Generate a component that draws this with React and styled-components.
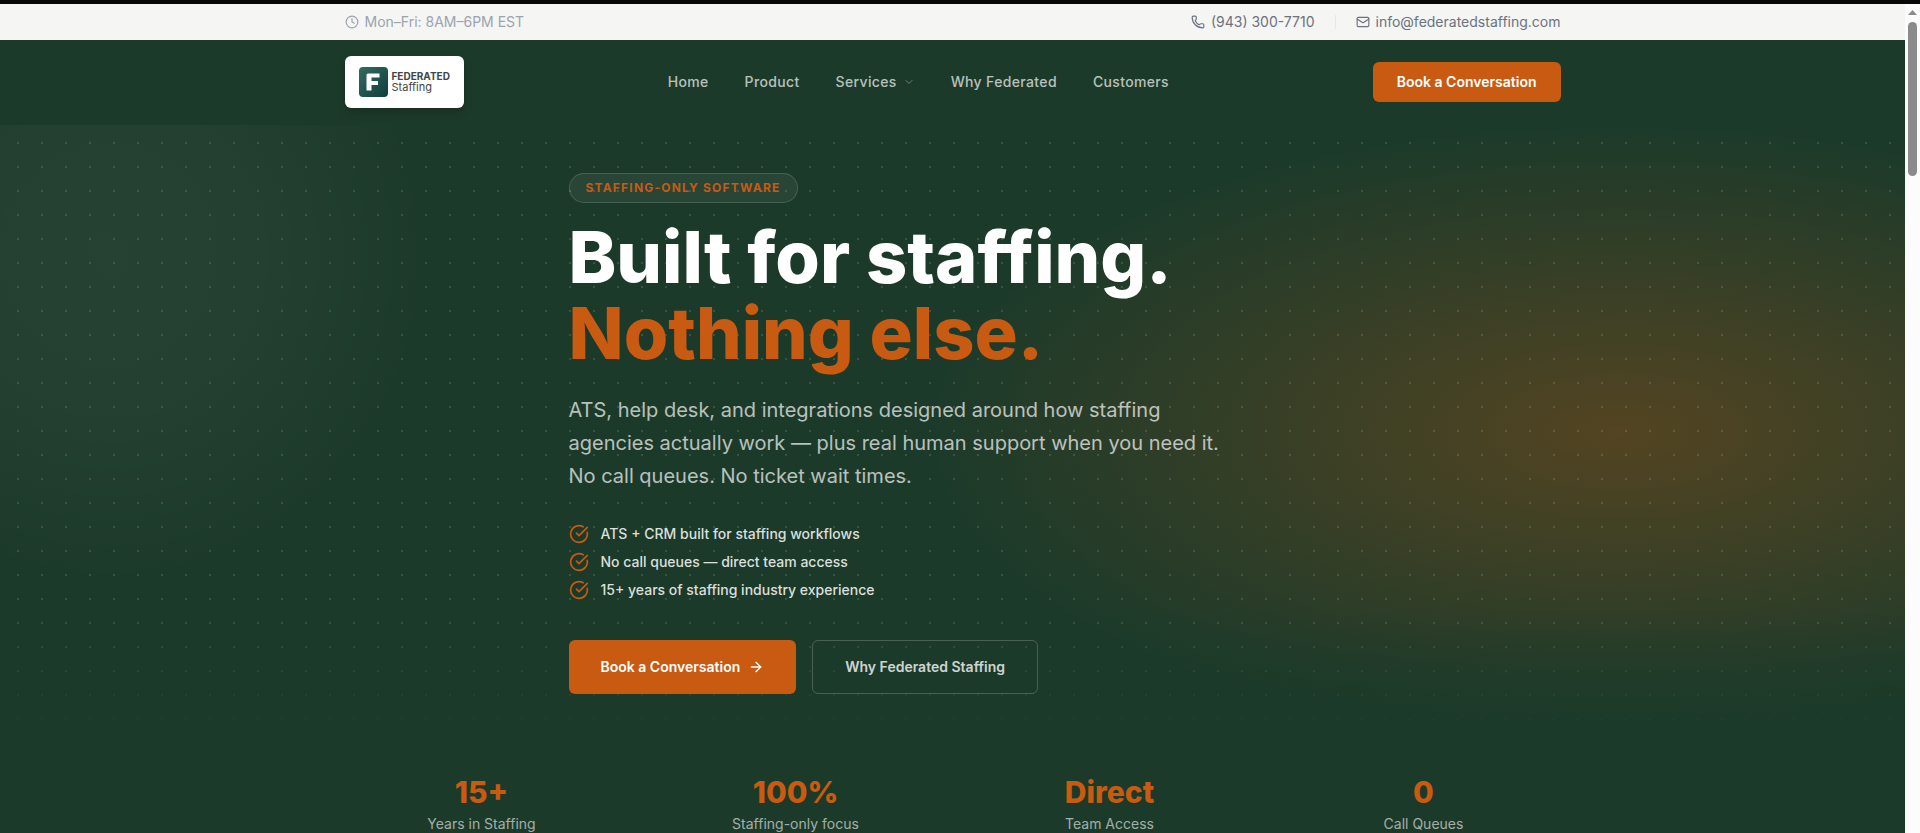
import React from "react";
import styled, { createGlobalStyle } from "styled-components";
import {
    ArrowRight,
    ChevronDown,
    CircleCheckBig,
    Clock,
    Mail,
    Phone,
} from "lucide-react";

const points = [
    "ATS + CRM built for staffing workflows",
    "No call queues — direct team access",
    "15+ years of staffing industry experience",
];

const stats = [
    { value: "15+", label: "Years in Staffing" },
    { value: "100%", label: "Staffing-only focus" },
    { value: "Direct", label: "Team Access" },
    { value: "0", label: "Call Queues" },
];

function Logo() {
    return (
        <LogoCard href="#" aria-label="Federated Staffing">
            <svg width="29" height="30" viewBox="0 0 29 30" aria-hidden="true">
                <defs>
                    <linearGradient id="mark" x1="0" y1="0" x2="1" y2="1">
                        <stop offset="0" stopColor="#356a60" />
                        <stop offset="1" stopColor="#0f3f3c" />
                    </linearGradient>
                </defs>
                <rect width="29" height="30" rx="4" fill="url(#mark)" />
                <path
                    d="M9 6.500h11.500v4h-8v3.500h6.500v4h-6.500v5.500h-5V8q0-1.500 1.500-1.500z"
                    fill="#fff"
                />
            </svg>
            <LogoText>
                <strong>FEDERATED</strong>
                <span>Staffing</span>
            </LogoText>
        </LogoCard>
    );
}

export default function App() {
    return (
        <Window>
            <GlobalStyle />
            <Page>
                <TopBar>
                    <Container>
                        <Hours>
                            <Clock size={14} />
                            Mon–Fri: 8AM–6PM EST
                        </Hours>
                        <Contacts>
                            <ContactLink href="tel:9433007710">
                                <Phone size={14} />
                                (943) 300-7710
                            </ContactLink>
                            <Divider />
                            <ContactLink href="mailto:info@federatedstaffing.com">
                                <Mail size={14} />
                                info@federatedstaffing.com
                            </ContactLink>
                        </Contacts>
                    </Container>
                </TopBar>
                <Header>
                    <Container>
                        <Logo />
                        <Nav>
                            <NavLink href="#">Home</NavLink>
                            <NavLink href="#">Product</NavLink>
                            <NavLink href="#">
                                Services
                                <ChevronDown size={12} />
                            </NavLink>
                            <NavLink href="#">Why Federated</NavLink>
                            <NavLink href="#">Customers</NavLink>
                        </Nav>
                        <Button>Book a Conversation</Button>
                    </Container>
                </Header>
                <Hero>
                    <HeroInner>
                        <Badge>STAFFING-ONLY SOFTWARE</Badge>
                        <Title>
                            <span>Built for staffing.</span>
                            <em>Nothing else.</em>
                        </Title>
                        <Lead>
                            ATS, help desk, and integrations designed around how
                            staffing agencies actually work — plus real human
                            support when you need it. No call queues. No ticket
                            wait times.
                        </Lead>
                        <Points>
                            {points.map((point) => (
                                <li key={point}>
                                    <CircleCheckBig size={20} />
                                    {point}
                                </li>
                            ))}
                        </Points>
                        <Actions>
                            <Button $large>
                                Book a Conversation
                                <ArrowRight size={16} />
                            </Button>
                            <OutlineButton $large>
                                Why Federated Staffing
                            </OutlineButton>
                        </Actions>
                    </HeroInner>
                </Hero>
                <Stats>
                    {stats.map((stat) => (
                        <Stat key={stat.label}>
                            <dd>{stat.value}</dd>
                            <dt>{stat.label}</dt>
                        </Stat>
                    ))}
                </Stats>
            </Page>
            <ScrollTrack aria-hidden="true">
                <svg width="9" height="5" viewBox="0 0 9 5">
                    <path d="M4.500 0L9 5H0z" fill="#8b8b8b" />
                </svg>
                <ScrollThumb />
            </ScrollTrack>
        </Window>
    );
}

const GlobalStyle = createGlobalStyle`
    * {
        box-sizing: border-box;
    }
    body {
        margin: 0;
        font-family: Inter, "Liberation Sans", sans-serif;
        font-size: 14px;
        line-height: 20px;
        background: #1c3a2a;
    }
    a {
        text-decoration: none;
    }
`;

const Window = styled.div`
    display: flex;
    height: 100vh;
    overflow: hidden;
    border-top: 4px solid #080808;
`;

const Page = styled.div`
    flex: 1;
    min-width: 0;
    background: #1c3a2a;
`;

const Container = styled.div`
    max-width: 1280px;
    margin: 0 auto;
    padding: 0 32px;
    display: flex;
    align-items: center;
    justify-content: space-between;
`;

const TopBar = styled.div`
    background: #f5f5f3;
    padding: 8px 0px;
`;

const Hours = styled.div`
    display: flex;
    align-items: center;
    gap: 6px;
    color: #9ca3af;
`;

const Contacts = styled.div`
    display: flex;
    align-items: center;
    gap: 20px;
`;

const ContactLink = styled.a`
    display: flex;
    align-items: center;
    gap: 6px;
    color: #6b7280;
`;

const Divider = styled.span`
    width: 1px;
    height: 14px;
    background: #e5e7eb;
`;

const Header = styled.header`
    padding: 16px 0px;
    border-bottom: 1px solid #1c3a2a;
`;

const LogoCard = styled.a`
    display: flex;
    align-items: center;
    gap: 4px;
    height: 52px;
    padding: 0px 14px;
    border-radius: 6px;
    background: #fff;
    box-shadow: 0 4px 8px rgba(0, 0, 0, 0.2);
`;

const LogoText = styled.span`
    display: flex;
    flex-direction: column;
    font-size: 11px;
    line-height: 11px;
    color: #454545;

    strong {
        font-size: 10px;
        font-weight: 700;
    }
`;

const Nav = styled.nav`
    display: flex;
    align-items: center;
    gap: 36px;
`;

const NavLink = styled.a`
    display: flex;
    align-items: center;
    gap: 6px;
    font-weight: 500;
    letter-spacing: 0.025em;
    color: rgba(255, 255, 255, 0.7);

    svg {
        opacity: 0.5;
    }
`;

const Button = styled.button`
    display: flex;
    align-items: center;
    gap: 8px;
    padding: ${(p) => (p.$large ? "17px 32px" : "10px 24px")};
    border: none;
    border-radius: 6px;
    background: #c85a11;
    color: #fff;
    font-family: inherit;
    font-size: 14px;
    font-weight: 600;
    line-height: 20px;
    cursor: pointer;
`;

const OutlineButton = styled(Button)`
    padding: 16px 32px;
    border: 1px solid rgba(255, 255, 255, 0.2);
    background: transparent;
    color: rgba(255, 255, 255, 0.8);
`;

const Hero = styled.section`
    padding: 48px 0px 44px;
    background:
        linear-gradient(to top, #1c3a2a, rgba(28, 58, 42, 0)) bottom / 100% 128px no-repeat,
        radial-gradient(circle at 18px 18px, rgba(255, 255, 255, 0.13) 1px, transparent 1px) 0 0 / 24px 24px,
        radial-gradient(ellipse 690px 306px at 85% 50%, rgba(200, 90, 17, 0.32), transparent),
        radial-gradient(ellipse 320px 330px at 110px 130px, rgba(255, 255, 255, 0.04), rgba(255, 255, 255, 0.03) 45%, transparent),
        #1c3a2a;
`;

const HeroInner = styled.div`
    max-width: 768px;
    margin: 0 auto;
`;

const Badge = styled.div`
    width: fit-content;
    padding: 6px 16px;
    border: 1px solid rgba(255, 255, 255, 0.15);
    border-radius: 15px;
    background: rgba(255, 255, 255, 0.06);
    color: #c85a11;
    font-size: 12px;
    font-weight: 700;
    line-height: 16px;
    letter-spacing: 0.1em;
`;

const Title = styled.h1`
    display: flex;
    flex-direction: column;
    margin: 16px 0px 0px;
    color: #fff;
    font-size: 72px;
    font-weight: 800;
    line-height: 76px;

    em {
        color: #c85a11;
        font-style: normal;
    }
`;

const Lead = styled.p`
    max-width: 672px;
    margin: 23px 0px 0px;
    color: rgba(255, 255, 255, 0.7);
    font-size: 20px;
    line-height: 33px;
`;

const Points = styled.ul`
    display: flex;
    flex-direction: column;
    gap: 8px;
    margin: 31px 0px 0px;
    padding: 0;
    list-style: none;

    li {
        display: flex;
        align-items: center;
        gap: 12px;
        color: rgba(255, 255, 255, 0.85);
        font-weight: 500;
    }
    svg {
        color: #c85a11;
    }
`;

const Actions = styled.div`
    display: flex;
    gap: 16px;
    margin-top: 40px;
`;

const Stats = styled.dl`
    display: grid;
    grid-template-columns: repeat(4, 1fr);
    gap: 40px;
    max-width: 1280px;
    margin: 0 auto;
    padding: 36px 32px;
`;

const Stat = styled.div`
    text-align: center;

    dd {
        margin: 0;
        color: #c85a11;
        font-size: 30px;
        font-weight: 800;
        line-height: 36px;
    }
    dt {
        margin-top: 4px;
        color: rgba(255, 255, 255, 0.6);
    }
`;

const ScrollTrack = styled.div`
    display: flex;
    flex-direction: column;
    align-items: center;
    gap: 7px;
    width: 15px;
    padding-top: 6px;
    background: #fcfcfc;
`;

const ScrollThumb = styled.div`
    width: 9px;
    height: 154px;
    border-radius: 5px;
    background: #8b8b8b;
`;
